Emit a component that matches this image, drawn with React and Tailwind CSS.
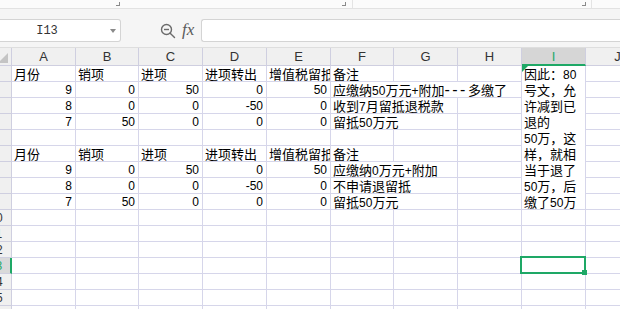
import React from 'react';

function T({ s }) {
  const parts = String(s).split(/(-{2,}|[0-9A-Za-z+\-]+)/);
  return (
    <>
      {parts.map((p, i) =>
        /^-{2,}$/.test(p) ? (
          <span key={i} className="text-[16px] leading-[0px] tracking-[2.5px]">{p}</span>
        ) : /^[0-9A-Za-z+\-]+$/.test(p) ? (
          <span key={i} className="text-[12px]">{p}</span>
        ) : (
          <React.Fragment key={i}>{p}</React.Fragment>
        )
      )}
    </>
  );
}

function Cell({ v, num, span }) {
  const spanCls = span === 3 ? 'col-span-3' : span === 2 ? 'col-span-2' : '';
  if (num) {
    return (
      <div className={`border-r border-b border-[#d6d6ea] overflow-hidden whitespace-nowrap text-right pr-[3px] pt-[2px] leading-none text-[12px] text-black ${spanCls}`}>
        {v}
      </div>
    );
  }
  return (
    <div className={`border-r border-b border-[#d6d6ea] overflow-hidden whitespace-nowrap pl-[2px] pt-[2px] leading-none text-[13px] text-black ${spanCls}`}>
      {v ? <T s={v} /> : null}
    </div>
  );
}

function RowHead({ n, active }) {
  return active ? (
    <div className="border-r-2 border-b border-r-[#1ea866] border-b-[#cfcfe0] bg-[#d9d9d9] text-center text-[12px] leading-none pt-[2px] text-[#1ea866]">
      {n}
    </div>
  ) : (
    <div className="border-r border-b border-[#cfcfe0] bg-[#f0f0f0] text-center text-[12px] leading-none pt-[2px] text-[#333]">
      {n}
    </div>
  );
}

function J() {
  return <div className="col-start-11 border-r border-b border-[#d6d6ea]" />;
}

const headRow = ['月份', '销项', '进项', '进项转出', '增值税留抵'];

const iLines = ['因此：80', '号文，允', '许减到已', '退的', '50万，这', '样，就相', '当于退了', '50万，后', '缴了50万'];

export default function App() {
  const letters = ['A', 'B', 'C', 'D', 'E', 'F', 'G', 'H'];
  const dataRows = [
    { n: 1, cells: headRow.map((v) => ({ v })), f: [{ v: '备注' }, { v: '' }, { v: '' }] },
    { n: 2, cells: [9, 0, 50, 0, 50].map((v) => ({ v, num: true })), f: [{ v: '应缴纳50万元+附加---多缴了', span: 3 }] },
    { n: 3, cells: [8, 0, 0, -50, 0].map((v) => ({ v, num: true })), f: [{ v: '收到7月留抵退税款', span: 2 }, { v: '' }] },
    { n: 4, cells: [7, 50, 0, 0, 0].map((v) => ({ v, num: true })), f: [{ v: '留抵50万元', span: 2 }, { v: '' }] },
    { n: 5, cells: ['', '', '', '', ''].map((v) => ({ v })), f: [{ v: '' }, { v: '' }, { v: '' }] },
    { n: 6, cells: headRow.map((v) => ({ v })), f: [{ v: '备注' }, { v: '' }, { v: '' }] },
    { n: 7, cells: [9, 0, 50, 0, 50].map((v) => ({ v, num: true })), f: [{ v: '应缴纳0万元+附加', span: 2 }, { v: '' }] },
    { n: 8, cells: [8, 0, 0, -50, 0].map((v) => ({ v, num: true })), f: [{ v: '不申请退留抵', span: 2 }, { v: '' }] },
    { n: 9, cells: [7, 50, 0, 0, 0].map((v) => ({ v, num: true })), f: [{ v: '留抵50万元', span: 2 }, { v: '' }] },
  ];
  const emptyRows = [10, 11, 12, 13, 14, 15, 16];

  return (
    <div className="w-[620px] h-[309px] overflow-hidden bg-white font-['Liberation_Sans','Noto_Sans_CJK_SC',sans-serif]">
      {/* top ribbon remnant */}
      <div className="h-[9px] bg-[#fbfbfb] border-b border-[#e2e2e2] flex">
        <div className="w-[120px] flex items-start justify-end pt-[2px]">
          <div className="w-[4px] h-[4px] border-r border-b border-[#8a8a8a]" />
        </div>
        <div className="w-[226px] flex items-start justify-end pt-[2px]">
          <div className="w-[4px] h-[4px] border-r border-b border-[#8a8a8a]" />
        </div>
        <div className="w-[6px]" />
        <div className="w-px h-full bg-[#e4e4e4]" />
        <div className="w-[233px] flex items-start justify-end pt-[2px]">
          <div className="w-[4px] h-[4px] border-r border-b border-[#8a8a8a]" />
        </div>
        <div className="w-[5px]" />
        <div className="w-px h-full bg-[#e4e4e4]" />
      </div>

      {/* formula bar */}
      <div className="h-[39px] bg-[#f5f5f5] border-b border-[#dedede] flex items-start pt-[10px]">
        <div className="w-[121px] h-[23px] bg-white border border-l-0 border-[#d4d4d4] rounded-r-[3px] flex items-center relative">
          <div className="flex-1 text-center pr-[20px] pl-[4px] font-['Liberation_Mono',monospace] text-[12px] text-[#333]">I13</div>
          <svg width="6" height="4" viewBox="0 0 6 4" className="mr-[4px]">
            <path d="M0 0 L6 0 L3 4 Z" fill="#8a8a8a" />
          </svg>
        </div>
        <div className="ml-[39px] mt-[4px]">
          <svg width="16" height="16" viewBox="0 0 16 16" fill="none" stroke="#6b6b6b" strokeWidth="1.4">
            <circle cx="6.5" cy="6.5" r="5" />
            <path d="M4 6.5 H9" />
            <path d="M10.2 10.2 L14.5 14.5" strokeLinecap="round" />
          </svg>
        </div>
        <div className="ml-[6px] mt-[1px] font-['Liberation_Serif',serif] italic text-[17px] leading-[20px] text-[#5a5a5a]">fx</div>
        <div className="ml-[7px] flex-1 h-[23px] bg-white border border-r-0 border-[#d4d4d4] rounded-l-[3px]" />
      </div>

      {/* sheet */}
      <div className="-ml-[19px] w-[703px] grid grid-cols-[31px_64px_63px_64px_64px_64px_63px_64px_64px_64px_64px] grid-rows-[18px_repeat(16,16px)]">
        {/* column header */}
        <div className="border-r border-b border-[#cfcfe0] bg-[#f0f0f0] flex items-end justify-end pr-[3px] pb-[2px]">
          <svg width="10" height="10" viewBox="0 0 10 10">
            <path d="M10 0 L10 10 L0 10 Z" fill="#c4c4c4" />
          </svg>
        </div>
        {letters.map((l) => (
          <div key={l} className="border-r border-b border-[#cfcfe0] bg-[#f0f0f0] text-center text-[13px] leading-[16px] pt-[1px] text-[#333]">
            {l}
          </div>
        ))}
        <div className="border-r border-b-2 border-r-[#cfcfe0] border-b-[#1ea866] bg-[#d6d6d6] text-center text-[13px] leading-[16px] pt-[1px] text-[#1ea866]">
          I
        </div>
        <div className="border-r border-b border-[#cfcfe0] bg-[#f0f0f0] text-center text-[13px] leading-[16px] pt-[1px] text-[#333]">
          J
        </div>

        {dataRows.map((r) => (
          <React.Fragment key={r.n}>
            <RowHead n={r.n} />
            {r.cells.map((c, i) => (
              <Cell key={i} v={c.v} num={c.num} />
            ))}
            {r.f.map((c, i) => (
              <Cell key={'f' + i} v={c.v} span={c.span} />
            ))}
            {r.n === 1 && (
              <div className="col-start-10 row-start-2 row-span-9 border-r border-b border-[#d6d6ea] relative pl-[2px] text-[13px] text-black">
                <div className="absolute left-0 top-0 w-0 h-0 border-t-[6px] border-t-[#1ea866] border-r-[6px] border-r-transparent" />
                {iLines.map((l, i) => (
                  <div key={i} className="h-[16px] pt-[2px] leading-none whitespace-nowrap">
                    <T s={l} />
                  </div>
                ))}
              </div>
            )}
            <J />
          </React.Fragment>
        ))}

        {emptyRows.map((n) => (
          <React.Fragment key={n}>
            <RowHead n={n} active={n === 13} />
            {letters.map((l) => (
              <div key={l} className="border-r border-b border-[#d6d6ea]" />
            ))}
            {n === 13 ? (
              <div className="border-r border-b border-[#d6d6ea] relative">
                <div className="absolute -left-[2px] -top-[2px] w-[66px] h-[18px] border-2 border-[#1ea866]">
                  <div className="absolute -right-[3px] -bottom-[3px] w-[5px] h-[5px] bg-[#1ea866]" />
                </div>
              </div>
            ) : (
              <div className="border-r border-b border-[#d6d6ea]" />
            )}
            <J />
          </React.Fragment>
        ))}
      </div>
    </div>
  );
}
